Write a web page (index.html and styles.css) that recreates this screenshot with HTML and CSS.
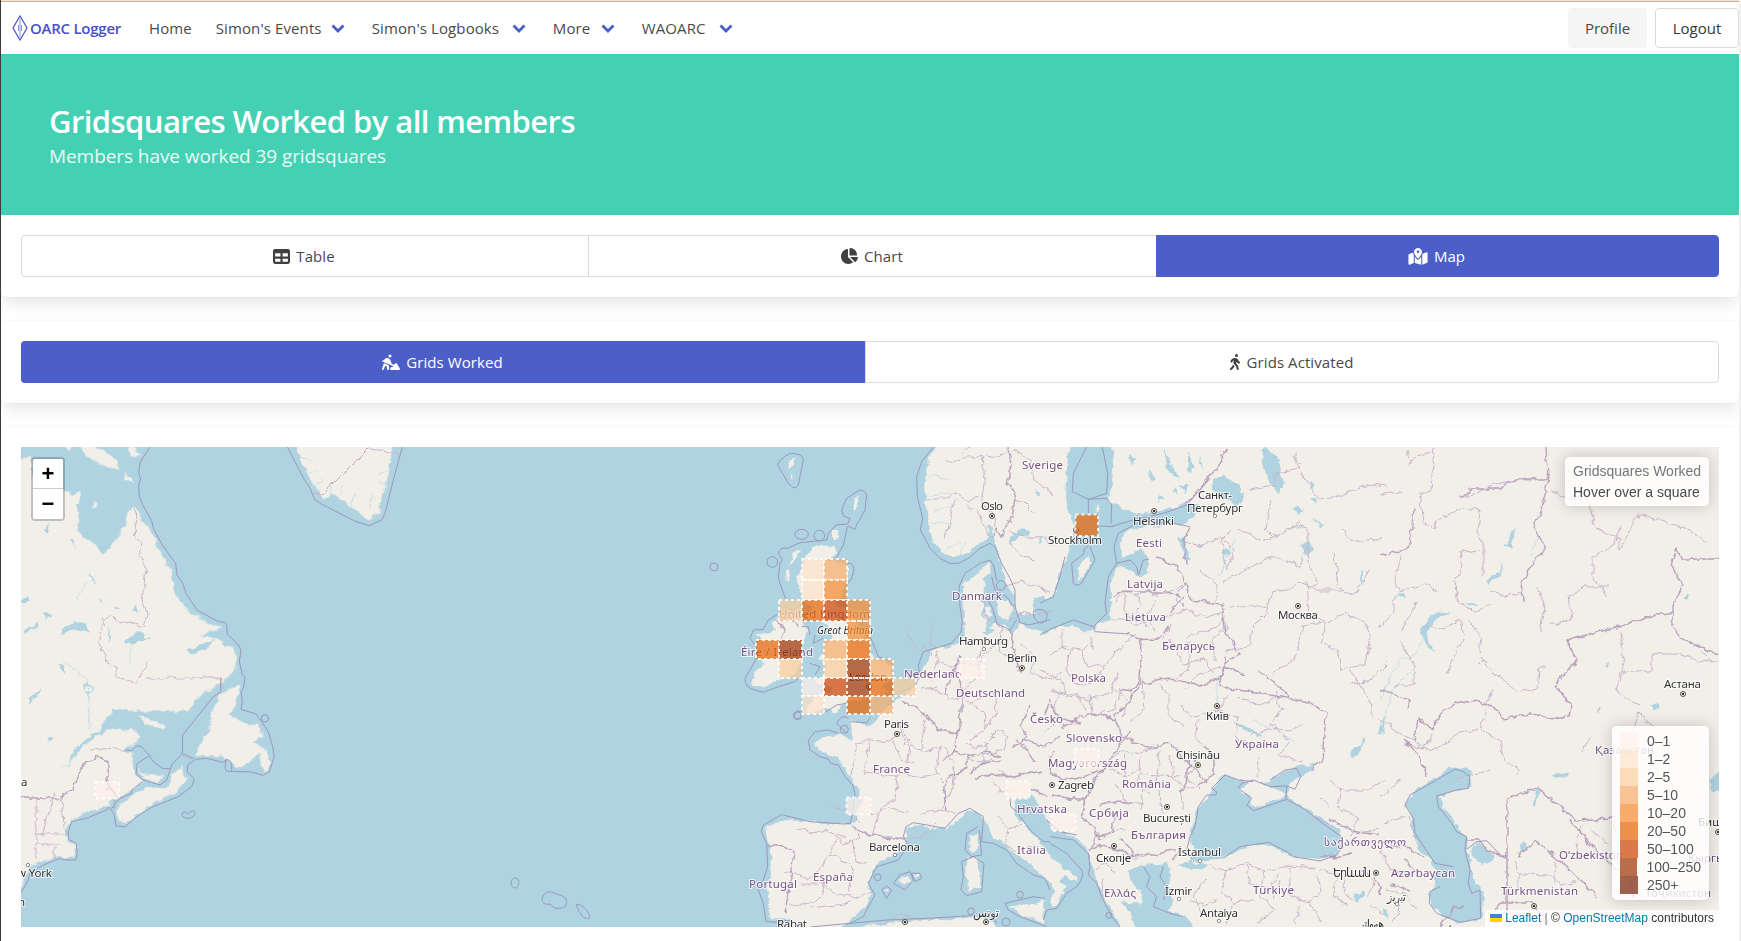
FILE: index.html
```html
<!DOCTYPE html>
<html lang="en">
<head>
<meta charset="utf-8">
<title>OARC Logger</title>
<link rel="stylesheet" href="styles.css">
</head>
<body>
<div class="page">
  <nav class="navbar">
    <a class="brand">
      <svg class="brand-mark" viewBox="0 0 16 26"><path d="M8 1 15 13 8 25 1 13Z" fill="none" stroke="#4a50c8" stroke-width="1.2"/><path d="M8 4v18M6.500 10v6M9.500 10v6" fill="none" stroke="#8d92df" stroke-width="1"/></svg>
      <span>OARC Logger</span>
    </a>
    <a class="nav-item">Home</a>
    <a class="nav-item has-menu" style="width:144px"><span>Simon's Events</span><svg class="chevron" viewBox="0 0 14 9"><path d="M1.500 1.500 7 7 12.500 1.500"/></svg></a>
    <a class="nav-item has-menu" style="width:169px"><span>Simon's Logbooks</span><svg class="chevron" viewBox="0 0 14 9"><path d="M1.500 1.500 7 7 12.500 1.500"/></svg></a>
    <a class="nav-item has-menu" style="width:77px"><span>More</span><svg class="chevron" viewBox="0 0 14 9"><path d="M1.500 1.500 7 7 12.500 1.500"/></svg></a>
    <a class="nav-item has-menu" style="width:106px"><span>WAOARC</span><svg class="chevron" viewBox="0 0 14 9"><path d="M1.500 1.500 7 7 12.500 1.500"/></svg></a>
    <div class="nav-buttons">
      <a class="button light">Profile</a>
      <a class="button outlined">Logout</a>
    </div>
  </nav>

  <header class="hero">
    <h1>Gridsquares Worked by all members</h1>
    <p>Members have worked 39 gridsquares</p>
  </header>

  <main>
    <section class="box">
      <div class="tabs views">
        <a class="tab"><svg viewBox="0 0 512 512" width="17" height="17"><path d="M64 256V160H224v96H64zm0 64H224v96H64V320zm224 96V320H448v96H288zM448 256H288V160H448v96zM64 32C28.700 32 0 60.700 0 96V416c0 35.300 28.700 64 64 64H448c35.300 0 64-28.700 64-64V96c0-35.300-28.700-64-64-64H64z"/></svg><span>Table</span></a>
        <a class="tab"><svg viewBox="0 0 576 512" width="18" height="16"><path d="M304 240V16.600c0-9 7-16.600 16-16.600C443.700 0 544 100.300 544 224c0 9-7.600 16-16.600 16H304zM32 272C32 150.700 122.100 50.300 239 34.300c9.200-1.300 17 6.100 17 15.400V288L412.500 444.500c6.700 6.700 6.200 17.700-1.500 23.100C371.800 495.600 323.800 512 272 512C139.500 512 32 404.600 32 272zm526.400 16c9.300 0 16.600 7.800 15.400 17c-7.700 55.900-34.600 105.600-73.900 142.300c-6 5.600-15.400 5.200-21.200-.7L320 288H558.400z"/></svg><span>Chart</span></a>
        <a class="tab active"><svg viewBox="0 0 576 512" width="20" height="17"><path d="M408 120c0 54.600-73.100 151.900-105.200 192c-7.700 9.600-22 9.600-29.600 0C241.100 271.900 168 174.600 168 120C168 53.700 221.700 0 288 0s120 53.700 120 120zm8 80.400c3.500-6.900 6.700-13.800 9.600-20.600c.5-1.200 1-2.500 1.500-3.700l116-46.400C558.900 123.400 576 135 576 152V422.800c0 9.800-6 18.600-15.100 22.300L416 503V200.400zM137.600 138.300c2.400 14.100 7.200 28.300 12.800 41.500c2.900 6.800 6.100 13.700 9.600 20.600V451.800L32.900 502.700C17.100 509 0 497.400 0 480.400V209.600c0-9.800 6-18.600 15.100-22.300l122.600-49zM327.800 332c13.900-17.400 35.700-45.700 56.200-77V504.300L192 449.400V255c20.500 31.300 42.300 59.600 56.200 77c20.500 25.600 59.100 25.600 79.600 0zM288 152a40 40 0 1 0 0-80 40 40 0 1 0 0 80z"/></svg><span>Map</span></a>
      </div>
    </section>

    <section class="box">
      <div class="tabs modes">
        <a class="tab active"><svg viewBox="0 0 576 512" width="18" height="16"><path d="M208 64a48 48 0 1 1 96 0 48 48 0 1 1-96 0zM9.800 214.800c5.100-12.200 19.100-18 31.400-12.900L60.700 210l22.900-38.100C99.900 144.600 129.300 128 161 128c51.400 0 97 32.900 113.300 81.700l34.600 103.700 79.300 33.100 34.200-45.600c6.400-8.500 16.600-13.300 27.200-12.800s20.300 6.400 25.800 15.500l96 160c5.900 9.900 6.100 22.200 .4 32.200s-16.300 16.200-27.800 16.200H288c-11.100 0-21.400-5.700-27.200-15.200s-6.400-21.200-1.400-31.100l16-32c5.400-10.800 16.500-17.700 28.600-17.700h32l22.500-30L22.800 246.200c-12.200-5.100-18-19.100-12.900-31.400zm82.800 91.800l112 48c11.800 5 19.400 16.600 19.400 29.400v96c0 17.700-14.300 32-32 32s-32-14.300-32-32V405.100l-60.600-26-37 111c-5.600 16.800-23.700 25.800-40.500 20.200S-3.900 486.600 1.600 469.900l48-144 11-33 32 13.700z"/></svg><span>Grids Worked</span></a>
        <a class="tab"><svg viewBox="0 0 320 512" width="12" height="16"><path d="M160 48a48 48 0 1 1 96 0 48 48 0 1 1-96 0zM126.500 199.300c-1 .4-1.900 .8-2.900 1.200l-8 3.500c-16.400 7.300-29 21.200-34.700 38.200l-2.600 7.800c-5.600 16.800-23.700 25.800-40.500 20.200s-25.800-23.700-20.200-40.500l2.600-7.800c11.400-34.100 36.600-61.900 69.400-76.500l8-3.500c20.800-9.200 43.300-14 66.100-14c44.600 0 84.800 26.800 101.900 67.900L281 232.700l21.400 10.700c15.800 7.900 22.200 27.100 14.300 42.900s-27.100 22.200-42.900 14.300L247 287.300c-10.300-5.200-18.400-13.800-22.800-24.500l-9.600-23-19.300 65.500 49.500 54c5.400 5.900 9.200 13 11.200 20.800l23 92.100c4.300 17.100-6.100 34.500-23.300 38.800s-34.500-6.100-38.800-23.300l-22-88.100-70.700-77.100c-14.800-16.100-20.300-38.600-14.700-59.700l16.900-63.500zM68.700 398l25-62.400c2.100 3 4.500 5.800 7 8.600l40.700 44.400-14.500 36.200c-2.400 6-6 11.500-10.600 16.100L54.600 502.600c-12.500 12.500-32.800 12.500-45.300 0s-12.500-32.800 0-45.300L68.700 398z"/></svg><span>Grids Activated</span></a>
      </div>
    </section>

    <section class="box">
      <div class="map">
        <svg class="tiles" viewBox="21 447 1698 480" width="1698" height="480">
          <defs>
            <filter id="rough" filterUnits="userSpaceOnUse" x="0" y="430" width="1741" height="511"><feTurbulence type="fractalNoise" baseFrequency=".11" numOctaves="3" seed="4"/><feDisplacementMap in="SourceGraphic" scale="7" xChannelSelector="R" yChannelSelector="G"/></filter>
            <radialGradient id="dot"><stop offset=".38" stop-color="#333"/><stop offset=".5" stop-color="#f4f0da"/></radialGradient>
          </defs>
          <rect class="sea" x="21" y="447" width="1698" height="480"/>
          <g filter="url(#rough)">
            <rect class="land" x="1045" y="435" width="700" height="505"/>
            <!-- eastern seas -->
            <g class="sea" transform="translate(1040 430) scale(.33333)">
              <path d="M90 40H215L220 110 215 170 205 215 240 230 280 250 330 248 400 235 440 215 480 225 470 245 450 270 430 285 400 280 340 290 300 290 250 310 240 350 245 385 300 360 325 380 322 430 300 445 275 425 240 405 215 440 210 500 212 575 170 580 160 605 130 605 100 585 50 590 0 620-60 590-130 600-130 560-75 550-22 548-20 505 0 512 45 490 60 430 85 370 95 320 110 290 90 260 75 200 80 120Z"/>
              <path d="M520 150 550 135 600 170 612 205 590 225 540 200 515 180ZM670 45 720 90 715 120 735 150 715 190 690 160 665 100ZM760 238l20-8 8 14-16 8ZM778 345l30-8 14 20-20 20ZM545 365l20-6 6 12-20 6ZM415 320l25 5-4 30 16 26-14 14-14-40ZM820 262l28 28-6 0-24-24ZM960 420l8 0 2 50-8-20ZM808 155l10 0-2 20-8-4ZM815 200l12 4 0 20-6-4Z"/>
              <path class="land" d="M110 410 150 375 155 400 130 440 112 452ZM160 232l12-4 8 8-12 8ZM240 325l25-8 8 12-20 10ZM240 355l30-10 20 8-10 14-34 8Z"/>
            </g>
            <g class="sea" transform="translate(1040 680) scale(.33333)">
              <path d="M-80 350-20 340 0 395 40 445 100 470 140 500 150 530 160 590 190 640 220 700 245 760H-80Z"/>
              <path d="M265 575 300 555 380 550 395 580 385 620 400 660 380 690 440 715 475 760H290L275 700 240 665 300 675 310 640 285 620Z"/>
              <path d="M450 490 455 440 475 380 500 360 520 320 550 285 600 300 640 315 690 305 700 290 770 260 830 250 790 290 750 310 740 345 755 360 800 385 860 425 900 450 910 500 890 530 800 540 730 520 690 495 640 495 590 515 550 535 500 540 440 545 470 520Z"/>
              <path d="M415 555 450 545 510 555 490 568 430 565ZM935 650l35-18 10 6-30 26ZM930 215l25-15 15-25 5 5-20 40-20 10ZM575 122l50 20 40 24-4 4-50-22ZM1015 160l14-40 10-18-16 60Z"/>
              <path class="land" d="M592 325 640 308 690 318 735 340 722 358 680 365 650 385 630 375 625 350Z"/>
            </g>
            <g class="sea" transform="translate(1380 690) scale(.33333)">
              <path d="M75 345 105 300 160 270 200 235 240 232 275 245 270 295 230 300 180 320 190 350 215 385 235 420 265 440 265 480 275 540 290 580 310 610 305 685 240 700 190 680 150 640 148 600 165 580 165 530 120 480 95 430 100 380ZM275 470 300 460 330 480 340 510 310 525 275 500ZM1025 235 990 275 995 310 1025 300ZM465 300l10-2-6 50-10 0ZM515 260l15-12 20 4 20-6-12 16-30 4ZM418 465l14-15 8 14-10 20-12-4ZM818 42l16-2 6 16-20 4ZM10 650l15 10-4 30-12-20Z"/>
            </g>
            <g class="sea" transform="translate(1380 430) scale(.33333)">
              <path d="M120 600l20-20 10-25 30-10 30 0-40 20-20 25-10 20 10 30 20 20-26-6ZM365 345l20-5 8-35 12-10-8 30 4 30-16 0ZM320 450l20-15 20-8 0-28 6 20-2 18-26 12-18 14ZM255 518l25-2 14 8-26 2ZM675 705l12-10-2 14-12 6ZM912 500l16-4-4 12-12 2ZM965 665l14 4-2 12ZM655 830l6 0-4 22-6 2ZM45 490l24 0 6 12-20-4Z"/>
            </g>
            <!-- Canada and Greenland -->
            <g class="land" transform="translate(0 430) scale(.33333)">
              <path d="M40 105 95 78 97 130 190 180 208 180 218 195 240 182 238 215 230 225 236 260 233 290 250 325 275 330 290 355 308 368 330 355 350 335 360 310 375 290 378 260 400 225 415 240 430 270 455 305 470 345 490 380 505 400 515 420 520 470 530 500 550 530 590 560 660 590 640 605 600 615 650 625 670 645 705 660 708 715 690 740 655 765 600 800 565 840 500 845 345 838 320 860 310 890 270 920 230 950 200 1000 180 1020 205 1000 240 958 300 910 345 895 400 897 418 925 400 945 365 955 395 965 395 1005 408 1040 430 1055 390 1085 330 1110 325 1130 280 1140 210 1170 195 1200 205 1235 230 1250 222 1280 185 1280 130 1290 90 1310 63 1370 40 1380Z"/>
              <path d="M420 1080 460 1073 510 1070 515 1035 545 1005 550 1030 565 1050 525 1090 470 1115 430 1140 375 1182 350 1160 355 1130ZM412 1010 430 1030 490 1035 470 1058 430 1045ZM410 857 450 865 500 890 495 898 440 885ZM235 45 275 90 340 118 360 118 350 90 310 60 280 40ZM190 45l20 25 5-20ZM380 50l20 32 18-5-20-30ZM375 125l25 20 0 14-24-12ZM278 215l14 0-2 16-12 6Z"/>
              <path d="M700 770 718 768 705 820 690 850 730 880 780 885 790 920 760 935 800 960 812 1000 800 1028 780 1010 785 970 730 1010 715 1015 690 990 640 975 585 978 600 940 625 900 635 850 660 795Z"/>
              <path d="M890 40 905 100 940 160 970 205 1000 190 1040 220 1070 245 1105 268 1140 250 1145 200 1165 140 1178 40Z"/>
            </g>
            <!-- north-west Europe -->
            <g class="land" transform="translate(700 430) scale(.33333)">
              <path d="M725 35 690 75 680 110 672 170 680 240 690 290 700 330 720 365 760 385 800 370 830 345 865 325 875 290 880 325 895 370 905 420 920 460 945 500 950 550 1000 555 1000 505 1060 490 1080 420 1105 370 1125 300 1105 240 1095 180 1100 35Z"/>
              <path d="M870 395 850 415 820 435 790 460 788 520 795 590 830 600 860 600 855 540 840 510 860 470 850 440 872 430ZM850 530l20 0 8 25-22 12-10-18ZM890 515l35-8 15 30-15 30-30-10ZM870 590l40-5 20 14-30 6Z"/>
              <path d="M1060 620 1000 600 960 585 940 610 900 600 860 610 830 590 790 585 795 620 780 640 720 655 690 665 680 700 660 740 645 770 620 790 590 810 560 830 540 850 520 885 495 890 455 870 460 920H1060Z"/>
              <path d="M340 350 400 345 410 370 385 395 430 400 445 420 440 450 420 500 400 520 430 530 445 545 480 590 505 640 520 690 550 690 580 710 565 750 545 775 575 785 540 800 500 805 460 810 430 820 400 850 380 835 340 845 310 855 340 810 360 795 390 790 400 770 370 765 345 755 370 730 375 700 350 690 380 670 375 640 395 620 385 590 360 570 330 575 320 560 340 530 310 520 300 480 290 450 310 400 325 370Z"/>
              <path d="M275 375 300 355 292 385 270 405ZM260 415l10 0-6 40-8-4ZM395 300l20 0-6 30-12 0ZM465 205l12-8-8 45-10-6ZM262 100l25-12 0 15-20 10ZM274 135l6 0 0 16-6-4Z"/>
              <path d="M235 560 275 545 305 575 325 600 310 640 305 690 290 730 240 750 185 775 155 765 160 730 190 700 180 680 165 655 185 630 170 610 225 600 215 575Z"/>
              <path class="sea" d="M865 285l8 0 4 40-8 0ZM935 320l20-20 20-5 15 10-10 14-24 4-16 20-10-6ZM1005 180l20 10-10 6ZM1010 340l10-26 6 0-6 26Z"/>
            </g>
            <!-- western Europe and Mediterranean -->
            <g class="land" transform="translate(700 690) scale(.33333)">
              <path d="M447 88 465 108 515 105 545 80 580 40H1070L1075 420 1020 360 1000 315 945 325 940 345 945 380 1000 430 1050 495 1095 540 1135 562 1130 575 1090 555 1080 570 1095 590 1080 625 1062 650 1050 635 1065 600 1045 575 1010 540 990 520 940 490 900 450 880 440 860 400 835 370 810 365 780 385 740 415 700 415 640 405 615 420 625 450 615 465 590 490 530 520 500 575 515 610 490 655 460 680 430 711 410 730H300L275 690 250 685 205 685 210 640 200 600 212 540 210 470 200 440 195 410 250 390 330 395 400 400 455 405 470 390 475 350 490 330 470 290 450 260 435 230 410 200 360 185 345 160 370 140 420 135 460 150Z"/>
              <path d="M925 650 1000 640 1035 632 1025 700 960 670ZM800 505 835 500 840 590 810 600 795 560ZM810 440 835 430 830 480 815 490ZM595 570l30-10 6 14-22 12ZM640 552l16 4-4 10ZM552 600l10-4 0 14ZM470 735 480 711 560 700 650 690 740 690 830 680 880 690 900 735Z"/>
            </g>
            <!-- lakes -->
            <g class="sea">
              <path d="M21 600l6-4 3 5-6 2ZM42 615l5-3 5 3-6 3ZM22 631l12-5 4-4 2 4-16 8ZM62 629l12-7 10 2 4 8-14-2-12 5ZM124 642l8-6 6-6 8 8 4 0-10 4-10 3ZM108 625l3 12-2 5ZM28 702l8-8 6-5-2 6-10 8ZM185 651l16-7 14-4-10 10-16 4ZM47 738l6 2-4 3ZM60 665l4 0 2 10-4-5ZM74 540l2 8-6-8ZM132 610l4-4 2 6ZM90 575l5 8-1 0-6-8ZM50 520l-6 12 3 0ZM100 598l3 2-3 2ZM116 606l3 3-4 0Z"/>
              <path d="M1150 470l6 8-4 4-4-8ZM1165 450l8 16 5 14-5-4-8-16ZM1188 452l4 8 0 14-4-4ZM1180 485l8 0-2 8ZM1130 455l6 4-4 8ZM1160 495l4 4-6 2ZM1172 492l5-4 0 7ZM1200 455l3 14-4-6Z"/>
            </g>
            <circle cx="88.500" cy="689" r="4.500" fill="none" stroke="#aad3df" stroke-width="1.300"/>
            <path class="river" d="M63 660l25 20 2 50M88 580l-12 22M130 640l0 24M150 510l12 10M155 530l14 8M160 550l14 4M165 565l12 4M175 590l12 4M185 600l16 6M190 612l18-4M300 458l12 3M305 475l12-5M312 488l10-8M328 498l6-12M338 503l4-16M350 510l5-18M370 510l2-16M390 470l-12 4M388 485l-10-3M930 475l20 4M928 495l22-2M935 510l20-5M932 525l20-3M946 550l14-8M960 556l6-14M990 540l0-14M1235 540l-16 35M1380 700l20-40 16-6 18-34M1382 735l10-45 26-26M1217 680l0 30M1254 720l40 20M1540 535l-10 20"/>
          </g>

          <!-- regional boundaries -->
          <g class="region" filter="url(#rough)">
            <path d="M133 505l4 12-3 18 8 8-2 14 6 12-4 30 5 14-3 14M110 614l10 10 12-2 10 5M110 614l-7 10-4 20 8 10-2 8 10 4 2 10 20 8 5-12 8-12M102 618l4 8M146 678h75v12M182 754l12 6M90 750l25-2 18 4M55 792l-10 30-2 14M62 795l2 32M36 799v60M36 834l27 0 6-4M35 844h26M54 846v14"/>
            <path d="M313 494l12-2 43-43 22 2 10 2"/>
            <path d="M946 462l28-5 25-1 9-3M960 455l10-8M982 457l3 22-4 22 12 15 2 12M926 500l20-2 10-4 12 7 10-4M955 500l-5 18-6 20M968 505l12 10 10 22M1014 450l16 10 4 20 12 8 6 10M1010 530l16 8 18-2 8 10M1013 500l10 2 10 10M1003 585l20-3 26 10M1008 540l12 14 14 6"/>
            <path d="M905 630l12 20 8-4 6 10M934 622l-4 16 8 20-8 22M936 660l16 8 12-6 14 4 4-20M982 600l6 20 14 8-4 22 16 8M1010 620l14-8 12 4 16-6M935 690l16 10 12-4 24 20-2 18M920 690l16-2M1000 640l-18 16-4 20-16 14M1020 645l14 12-4 16 22 6 10-8"/>
            <path d="M855 745l14-6 20 2 12-8 10 10-4 20M870 740l-6 32M893 740l8 20 14 4M902 725l6 20 14 6 22-4 10 16M857 745l-6 30M864 772l34 4 8-3 14 4 18-3M898 776l-3 22-14 10-10 28M880 835l22 4 20-2 14-12M872 815l16-8 20 6M905 745l-6-22M940 745l-4 28 8 10M920 815l20-5 14 4M926 720l-6 30M955 766l-2 22-12 20M830 805l20 6 12 12"/>
            <path d="M795 829l18 4 12-3 20 8M835 835l8 10 10-4 8-8M785 870l22 10M807 880l10-8 12-18 12 4 12 12-4 22M790 905l24-2 8-8 4-20M852 898l20-6M829 854l4-10 14-8M852 840l4 20 10 4M800 884l20 0M820 880l16 14 16 2M811 908l40-5"/>
            <path d="M968 705l14-10 12-4 2 20-10 18-16 12M988 740l10-10 10 6-4 14-22 6M965 742l10 6 14-6M968 758l12 4 14-4M985 740v20M1000 770l10 6 16-4M990 782l12 10 12-2M998 815l10 14 14-4M1008 830l-4 14 12 8M1015 826l10-10M1020 850l14-5"/>
            <path d="M1062 630l0 18 20 2 10-10M1050 655l18-10M1082 650l6 18 18-4 18-20 12-10M1070 650l-4 20 12 16 16-4 10-16M1090 636l2 14M1040 670l20 8 8 18 22 4 22-8 6-20M1060 690l-6 22M1090 695l2 20M1115 690l12 10-4 18M1115 600l10-8 14 4 8-6 12 6M1140 595l-2 18 8 14M1125 595l0 20 14 6M1155 600l-8 18 8 14M1110 620l14 0 14 6 18-8M1165 595l18-10-8 15 8 8"/>
            <path d="M1160 620l26-12 20 10 16-6 6 16-14 10 0 22M1170 640l14 24 20-4 10 14M1225 610l-8 18-30 8M1190 640l-2 30-22 12M1172 625l-10 14M1185 690l14-16 22-6M1228 605l40 2M1226 570l-4-30 8-10M1240 530l20 10 18-4 22-14M1222 582l40-20 12-6 26 10 8-20M1200 570l16 14 0 18M1183 540l20 6 18-10 14 14-10 20M1272 500l-6 28 10 10M1292 525l16 4 0 32 10 22-10 6M1272 592l14-2 12-8 18 8 26 0M1272 592l-6 22-16 16 0 16-24 6M1307 582l2 30 16 10-4 22M1324 625l22-12 22 12 2 20-6 20-22 4-4-18-14-8M1300 640l-6 20-22 14M1300 640l2-14 20-4"/>
            <path d="M1250 490l24-4 0-12 26-5M1296 450l0 14 12 20 12 14 20-2 30-12 18 2M1300 465l-8-10M1407 450l3 14 6-8 16-4M1434 448l-3 42-12 6M1380 495l24-4M1420 492l4 30 10 8 4-10 22-10M1459 498l14-4 24-10 18-4 20 0M1462 508l18 2-2 22 5 12 0 34M1480 550l-18 2-2 20-6 10 4 20 18 10 14-8M1490 592l18 4 14-2M1400 590l-6-10 8-24M1398 592l26-8 14 8M1340 530l16 12 26-4M1370 570l-12 22-12 2-8-10-4-30M1394 595l0 16-16 18M1418 602l-18 30M1465 620l14 12 2 30 18 14 18 16 20-4 2-20 8 0M1537 588l8 20-4 24M1420 626l24 4 14-10 8 14-20 40M1550 490l20 10 16-4 10 32 22 10 2 12 10-20 8-16 40 12 30 16M1607 596l-14-20 0-20 20-10 8-20M1620 630l4 42 28-2 0-16 30 0 16 8 20-2M1548 625l24-6-4-22 16-10 24 0M1622 672l-6 18 22 16M1378 718l30 20 16 10 8-14M1400 640l14 26 0 20-20 0M1390 660l-20 20-18 4M1350 670l20 30 2 20"/>
            <path d="M1050 690l28 6 8 14M1057 720l-10 12M1122 690l-8 20-20 6M1160 684l8 12 0 20 16 10M1142 680l2 30-16 12M1180 705l10 12 28-6 10-16M1217 710l22 8-4 18 18 14M1198 720l-4 14 14 16M1237 697l24 8 14-8M1274 690l8 20-12 14 18 14M1250 735l18-6 22 2 14-8M1290 740l-12 16 24 6M1260 758l-4 20"/>
            <path d="M1110 758l14-8 16 4 18-10M1112 770l16 6 12-8M1124 750l2 26M1140 755l-2 30 12 8M1160 750l-4 32M1140 775l40 2M1170 755l4 24 18 10M1117 784l10 20 16 0M1143 790l-4 20M1160 790l2 24M1180 790l4 20M1200 765l-16 12 16 12"/>
            <path d="M1090 790l-6 16M1100 840l10-8 14-2M1094 870l12-6 10 10M1104 878l-4 24M1130 860l18-4M1330 780l12 10-4 16 20 12-8 18M1340 790l26 0 20-10M1320 798l10 8M1310 815l22 10M1332 822l28 10 20-4"/>
            <path d="M1210 865l16 6 20-8 18 8 28-6 24 2M1205 880l-12 16 10 20M1226 870l-6 22 14 10-8 22M1246 865l4 20 20 4 8-16M1264 870l-4 24 14 16-18 14M1292 865l-4 30 20 8 14-12-6-18M1300 905l-6 20M1234 902l20-2M1320 870l18 4-6 22 18 10M1308 900l12 20M1280 880l-6 20M1216 900l-14 6M1350 865l-8 22 10 14M1190 900l14 4"/>
            <path d="M1518 775l0-5-14-10-4-20-20-10M1405 745l34 4 16-14 22-6M1490 770l-18 5-18 4M1380 798l20-18M1385 823l24-8 4 18 10 14M1580 860l-4-20 6-16M1515 860l3 14 0 16M1518 874l34 1 8 10 16-4M1555 862l0 20M1582 752l8-15M1480 730l12-40M1610 760l20-18 8-30 16 15M1590 830l20 14"/>
            <path d="M880 925l20-10 20 4M1380 850l10 20 16 4M1360 870l14 10-6 18M1385 890l20 4 12 16M1400 905l-8 20M1370 905l16 12"/>
          </g>

          <!-- national boundaries -->
          <g class="nation" filter="url(#rough)">
            <path d="M21 798h37l14-8 12-28 14-5 10 5v26l8 8-2 14M1009 447l2 20-4 16 8 8-4 26-10 20-4-8-4 10M1228 447l-10 20-26 30-6 7M1190 525l-6 16 2 24M1113 597l10-6 18 1 20 0 10 2 10 2M1157 557l20 10 8 14 6 20M1170 612l14-16M1190 600l32 4 4 30 14 20-16 10M1139 640l20-2 10-12M1127 633l14 8-2 40-8 10-12-2M1140 684l30-6 30 8 20-8 4-12 20 8M1226 656l-6 30 30 6 60 10 16 12-4 44-12 12M1258 672l20 12 12 14M1140 682l-10 20-16 14 8 20 26 12 22-6M1130 732l-12 16-14 20M1170 744l12 14 14 12 10 12M1190 758l-4 26-6 8M1206 745l8 16 0 14-16 10M1115 720l-18-6-16 2-20 12M1050 705l12 14 20 4M1105 768l-20 8-22 4-14-10 4-20M1104 768l-10 12-8 20M1086 798l-4 20 12 8 6 14M1052 795l20 4 14 0M1100 805l20-4 12 2M1098 845l34 10 24 0 18-6M1090 850l8-14 14-4 2-14M1120 838l14 14-6 6M1180 848l-6 12"/>
            <path d="M902 700l18 10 20 20 18 4 4-24 0-20-8-20M958 730l-4 22 14 4 0 12-20 10M948 778l-4 14 2 20M968 756l18-4 14 4M942 760l12-8M975 780l14-6 22 2 14-4M1000 760l-16 2-14 12M1015 740l12 8 8 14M1031 706l-10 20 6 12-14 10M1022 740l22 6 16-10M1028 790l10 0 8 6M1050 700l-6 16M1022 775l20-4M852 826l14 8 24 4 18 4M768 846h12l14 6-2 16-2 20-6 26M781 640l4-10-8-10 14-2 8 8M1010 630l10 44M960 655l-16 40M1100 845l-10 4"/>
            <path d="M1546 447l2 30-4 24-10 26 12 22-14 14-10 20 2 18M1547 479l-32 0-16 10-28 0-10 10M1380 555l20-4 10-6 4-36M1719 559h-38l-4-10-6 16 12 20-10 20 0 20 6 14 18 6 22 10M1675 613l-28 4-24 8-58 16 12 18-10 12-12 14 8 10 8 12-2 10-20 2-10-6-16 2-20 4-6-10-18-8-12 2-10-2-18 14-6 14-14-10-6 22M1507 915V798l30-10 40 32 36-2 2 14M1570 820l20 24 20 20 20 14 4 20M1380 690l30 10-2 8M1404 740l14 14 8 22M1507 856l-14-2-14-14-12 0M1518 855l16-14 20 14 24 22 20 20M1404 860l14 10M1380 842l30 6 14 10M1330 820l20 10 30 4M1320 855l18 2 14-4M1375 876l6 20M1390 885l20 6M1490 917l10-14 30 0 20 20M1440 927l14-20 10 0"/>
          </g>

          <!-- territorial waters -->
          <g class="marine">
            <g transform="translate(0 430) scale(.33333)">
              <path d="M450 51 420 97 416 130 422 147 416 165 418 200 428 225 455 272 460 295 487 345 527 400 531 435 547 457 558 490 592 541 655 575 675 577 680 585 682 612 715 645 723 660 718 695 727 733 735 742 730 775 723 785 727 815 723 838 768 852 785 875 805 905 818 950 823 980 808 1025 790 1036 755 1026 697 1024Q675 1028 675 1010L678 990Q690 985 695 1005V1024M678 990 668 997 620 985 587 988 563 1005 562 1025 583 1048 575 1070 535 1100 455 1132 415 1157 375 1190 348 1188 342 1150 325 1130 320 1140 295 1150 265 1163 215 1175 205 1205 206 1228 228 1240 232 1265 228 1290 200 1290 178 1286 130 1305 90 1330 85 1350 63 1388M662 745V785L640 800 548 915 547 970 583 987M547 970 515 1005 512 1016 487 1015 460 995 447 975 425 950 410 948 395 962 375 960M447 978 412 1000 408 1030 425 1048 480 1065 500 1050 512 1016M335 1135 360 1105 395 1090 395 1080 430 1053M862 51 912 147 930 175 945 210 960 220 1068 275 1108 287 1145 270 1155 250 1180 150 1207 51"/>
              <circle cx="795" cy="865" r="11"/><path d="M566 1150q14-14 18-4t-12 18q-22 4-25-8t12-10q3 8 7 4"/>
            </g>
            <g transform="translate(700 430) scale(.33333)">
              <path d="M700 51 665 95 650 140 652 200 668 265 661 300 675 325 690 355 720 385 750 400 775 400 805 385 840 355 870 340 885 350 905 400 930 445 945 480 945 530 960 578 985 585 1050 570M890 450 880 405 870 390 840 400 795 430 777 470 780 530 787 575 783 605 755 640 670 665 655 705 660 740 640 770 580 795M860 500 880 540 890 580 930 600 950 570M875 440 885 480 920 500 940 530M408 385 430 345 440 300 445 288 465 298 470 285 495 240 500 195Q490 175 475 182L440 205 425 240 430 258 450 265 443 282 408 285 385 310 380 330 300 338 262 355Q240 350 235 370L247 390 240 400 235 445 247 480 258 510M440 400Q460 395 462 420L455 445 440 465M511 620 535 680 562 690 580 705M305 590 325 590 330 615M345 615 340 640 370 625M330 700 360 710 345 735M300 545 258 550 230 555 205 570 190 598 160 600 150 625 170 650 167 690 147 725 135 745Q135 775 165 780L190 787 235 770 285 755 305 735M305 865Q280 875 283 855L292 843 305 845M370 850 410 825 440 820M270 70Q235 90 233 105L265 160Q285 185 295 165L310 90Q310 70 270 70"/>
              <circle cx="42" cy="411" r="12"/><circle cx="217" cy="396" r="16"/><ellipse cx="305" cy="313" rx="20" ry="15"/><circle cx="358" cy="317" r="16"/><circle cx="903" cy="466" r="14"/>
            </g>
            <g transform="translate(1040 430) scale(.33333)">
              <path d="M140 51 100 130 97 185 145 208 200 190 203 130 187 51M145 208V250M145 208 200 205 215 225 213 280M173 288 220 290M213 290 280 270 370 250 440 225 510 145M450 290 400 280 300 275 235 310 222 350 230 400 205 440 195 520 200 550 160 590 100 570 30 598 0 615M230 400 270 390 290 410 295 435 310 390 325 388M145 348Q128 355 132 370L95 400 100 460Q120 475 130 450L165 390 150 350M160 590 165 605 265 612M75 380 60 440 40 500 0 520M-20 545Q0 530 20 548 25 570 5 580-20 575-20 545"/>
            </g>
            <g transform="translate(700 690) scale(.33333)">
              <path d="M445 85Q425 70 410 100L440 130M450 95 500 98 512 82M415 130 385 120 345 125 325 150 330 180 360 200 385 207 392 220 415 225 435 260 458 285 465 310 460 350 452 400 430 402 330 395 245 374 190 405 184 425 200 460 203 530 190 570 175 600 190 640 198 695 230 697 270 690 290 700M440 705 490 680 500 660 525 615 505 580 530 530 595 510 625 465 610 440 618 410 640 398 680 405 735 415 775 370 810 355 850 380 845 455 880 460 920 480 950 520 1000 555 1035 565 1050 600M835 410 800 430 795 480 815 500 845 495 838 420M820 500 785 515 790 560 783 600 800 617 845 605 852 520ZM930 320 932 350 950 365 990 420 1030 455 1050 455M1035 625 1000 620 915 640 925 660 960 680 1040 710M330 711 450 700 560 690 680 685 800 678 870 665 890 700M580 580 600 555 630 545 640 570 615 600ZM635 550 660 550 665 565 645 575ZM545 600 560 588 575 600 560 625Z"/>
              <circle cx="292" cy="76" r="11"/><circle cx="433" cy="118" r="12"/><circle cx="533" cy="562" r="10"/><circle cx="813" cy="664" r="10"/><circle cx="960" cy="614" r="10"/><circle cx="918" cy="696" r="12"/>
            </g>
            <g transform="translate(1040 680) scale(.33333)">
              <path d="M30 470 100 480 145 520 150 560 145 585 170 610 185 650 205 690 215 710 240 741M30 490 80 520 125 570Q135 590 110 620L80 640 50 685 20 690 10 720M20 420 60 455 110 465M310 560 330 590 320 620 350 650 340 680 390 700 430 710M370 560 360 590 380 620 370 660M550 535 600 500 685 487 740 515 760 530 840 543 890 525 908 500 905 470 855 435 790 385 740 358 690 375 640 392 620 375 635 355 595 325 605 310 640 300 690 320 740 318 765 328 782 290 770 265 735 270 690 300M640 305 595 300 555 285 515 325Q535 335 528 345L500 345 475 380 465 440 450 470 440 510 455 535M740 318 738 358"/>
              <circle cx="207" cy="706" r="9"/>
            </g>
            <g transform="translate(1380 690) scale(.33333)">
              <path d="M75 345 90 315 170 270 225 237 250 245 270 260 265 295 230 300 170 318 175 350 215 400 230 425 260 440 255 480 270 540 265 580 275 610 300 600 302 685 240 697 170 670 148 640 150 605 180 590M220 530 165 520 105 430 100 385 75 345M260 478 290 455 320 452 345 478 365 498 382 498"/>
            </g>
            <ellipse cx="515" cy="883" rx="4" ry="5"/><path d="M542 898q4-10 14-4 14 2 10 12-10 6-16-2-8 2-8-6ZM576 904q12 2 14 14-8 4-14-14"/>
          </g>

          <!-- country labels -->
          <g class="country">
            <text x="1022" y="469" textLength="41">Sverige</text><text x="952" y="600" textLength="50">Danmark</text><text x="779" y="618" textLength="91">United Kingdom</text><text x="741" y="656" textLength="72">Éire / Ireland</text><text x="904" y="677.500" textLength="58">Nederland</text><text x="956" y="697" textLength="69">Deutschland</text><text x="1030" y="723" textLength="33">Česko</text><text x="1136" y="547" textLength="26">Eesti</text><text x="1127" y="588" textLength="36">Latvija</text><text x="1125" y="621" textLength="41">Lietuva</text><text x="1162" y="650" textLength="53">Беларусь</text><text x="1071" y="681.500" textLength="35">Polska</text><text x="1066" y="742" textLength="56">Slovensko</text><text x="1048" y="767" textLength="79">Magyarország</text><text x="1122" y="788" textLength="49">România</text><text x="1235" y="748" textLength="44">Україна</text><text x="1089" y="817" textLength="40">Србија</text><text x="1131" y="839" textLength="55">България</text><text x="1017" y="812.500" textLength="50">Hrvatska</text><text x="1017" y="854" textLength="29">Italia</text><text x="873" y="773" textLength="37">France</text><text x="813" y="881" textLength="40">España</text><text x="749" y="888" textLength="48">Portugal</text><text x="1104" y="897" textLength="32">Ελλάς</text><text x="1253" y="894" textLength="41">Türkiye</text><text x="1324" y="846" textLength="82">საქართველო</text><text x="1391" y="877" textLength="64">Azərbaycan</text><text x="1501" y="895" textLength="77">Türkmenistan</text><text x="1559" y="859" textLength="64">O‘zbekiston</text><text x="1595" y="754" textLength="59">Қазақстан</text><text x="1688" y="862">Кыргызстан</text><text x="1645" y="897" textLength="66">Тоҷикистон</text>
          </g>
          <g class="city">
            <text x="981" y="510" textLength="22">Oslo</text><text x="1048" y="544" textLength="54">Stockholm</text><text x="1133" y="524.500" textLength="41">Helsinki</text><text x="1198" y="499" textLength="34">Санкт-</text><text x="1187" y="512" textLength="56">Петербург</text><text x="959" y="645" textLength="49">Hamburg</text><text x="1007" y="662" textLength="30">Berlin</text><text x="1278" y="619" textLength="40">Москва</text><text x="1206" y="720" textLength="23">Київ</text><text x="1176" y="759" textLength="44">Chișinău</text><text x="1058" y="789" textLength="36">Zagreb</text><text x="1143" y="822" textLength="48">București</text><text x="1096" y="862" textLength="35">Скопје</text><text x="1178" y="856" textLength="43">İstanbul</text><text x="1165" y="895" textLength="27">İzmir</text><text x="1200" y="917" textLength="38">Antalya</text><text x="849" y="681" textLength="38">London</text><text x="884" y="728" textLength="25">Paris</text><text x="869" y="851" textLength="51">Barcelona</text><text x="777" y="928" textLength="30">Rabat</text><text x="973" y="917" textLength="26">تونس</text><text x="1333" y="877" textLength="38">Երևան</text><text x="1387" y="901" textLength="19">تبریز</text><text x="1359" y="928" textLength="25">هەولێر</text><text x="1440" y="934">تهران</text><text x="1664" y="688" textLength="37">Астана</text><text x="1698" y="826">Бишкек</text><text x="21" y="786">a</text><text x="17" y="877" textLength="35">w York</text><text x="18" y="906">n</text>
            <text class="island" x="817" y="634" textLength="56">Great Britain</text>
          </g>
          <g class="capital">
            <circle cx="992" cy="516" r="2.500"/><circle cx="1076" cy="530" r="2.500"/><circle cx="1154" cy="511" r="2.500"/><circle cx="1022" cy="668" r="2.500"/><circle cx="1298" cy="606" r="2.500"/><circle cx="1217" cy="706" r="2.500"/><circle cx="1198" cy="765" r="2.500"/><circle cx="1052" cy="785" r="2.500"/><circle cx="1167" cy="807" r="2.500"/><circle cx="1114" cy="846" r="2.500"/><circle cx="869" cy="687" r="2.500"/><circle cx="897" cy="734" r="2.500"/><circle cx="905" cy="922" r="2.500"/><circle cx="986" cy="922" r="2.500"/><circle cx="1376" cy="873" r="2.500"/><circle cx="1683" cy="694" r="2.500"/><circle cx="1534" cy="906" r="2.500"/><circle cx="1718" cy="832" r="2.500"/>
          </g>
          <g class="town">
            <circle cx="984" cy="649" r="1.700"/><circle cx="1215" cy="516" r="1.700"/><circle cx="895" cy="855" r="1.700"/><circle cx="1200" cy="861" r="1.700"/><circle cx="1179" cy="899" r="1.700"/><circle cx="1219" cy="921" r="1.700"/><circle cx="1397" cy="904" r="1.700"/><circle cx="28" cy="865" r="1.700"/>
          </g>

          <!-- worked gridsquares -->
          <g class="grid">
            <path class="g0" d="M802 678h22v18h-22zM960 659h24v19h-24zM846.500 797.500h24v17h-24zM1006.500 781.500h23v17h-23zM1074.500 749h24v17.500h-24zM1051.500 814.500h24v16.500h-24zM95.500 782h23.500v16.500H95.500z"/>
            <path class="g1" d="M802 559h22v21h-22zM802 580h22v20h-22zM802 696h22v18h-22z"/>
            <path class="g2" d="M779 600h23v21h-23zM779 659h23v19h-23zM824 659h23v19h-23zM893 678h23v18h-23z"/>
            <path class="g3" d="M824 559h23v21h-23zM824 640h23v19h-23zM870 659h23v19h-23zM870 696h23v18h-23z"/>
            <path class="g4" d="M824 580h23v20h-23zM847 600h23v21h-23zM847 621h23v19h-23z"/>
            <path class="g5" d="M802 600h22v21h-22zM756 640h23v19h-23zM847 640h23v19h-23zM870 678h23v18h-23zM847 696h23v18h-23zM1075.500 514.500h22.500v21.500h-22.500z"/>
            <path class="g6" d="M824 600h23v21h-23zM824 678h23v18h-23z"/>
            <path class="g7" d="M779 640h23v19h-23zM847 659h23v19h-23zM847 678h23v18h-23z"/>
          </g>
        </svg>

        <div class="zoom"><a>+</a><a>−</a></div>
        <div class="info panel"><h4>Gridsquares Worked</h4><span>Hover over a square</span></div>
        <div class="legend panel">
          <div><i class="k0"></i>0–1</div><div><i class="k1"></i>1–2</div><div><i class="k2"></i>2–5</div><div><i class="k3"></i>5–10</div><div><i class="k4"></i>10–20</div><div><i class="k5"></i>20–50</div><div><i class="k6"></i>50–100</div><div><i class="k7"></i>100–250</div><div><i class="k8"></i>250+</div>
        </div>
        <div class="attribution"><svg viewBox="0 0 12 8" width="12" height="8"><path fill="#4c7be1" d="M0 0h12v4H0z"/><path fill="#ffd500" d="M0 4h12v4H0z"/></svg> <a>Leaflet</a> <span class="bar">|</span> © <a>OpenStreetMap</a> contributors</div>
      </div>
    </section>
  </main>
</div>
</body>
</html>
```
FILE: styles.css
```css
* { box-sizing: border-box; }
html { overflow: hidden; }
body {
  margin: 0;
  height: 941px;
  overflow: hidden;
  background: #f0f0f0;
  color: #4a4a4a;
  font: 16px/24px "Open Sans", "Noto Sans", sans-serif;
}
.page {
  height: 941px;
  margin-right: 2px;
  overflow: hidden;
  border-left: 1px solid #3c3a3c;
  background: #fff;
}
.page::before {
  content: "";
  display: block;
  height: 1px;
  background: #fbe2cc;
  border-bottom: 1px solid #c9b2a2;
}

/* navigation */
.navbar { display: flex; align-items: center; height: 52px; background: #fff; }
.brand {
  display: flex;
  align-items: center;
  width: 136px;
  padding-left: 11px;
  color: #4a50c8;
  font-size: 15px;
  font-weight: 600;
  letter-spacing: -.25px;
  white-space: nowrap;
}
.brand-mark { width: 16px; height: 26px; margin-right: 2px; }
.nav-item {
  display: flex;
  align-items: center;
  padding: 0 12px;
  font-size: 15px;
  letter-spacing: .1px;
  white-space: nowrap;
}
.has-menu { justify-content: space-between; box-sizing: content-box; padding-right: 0; }
.chevron { width: 14px; height: 9px; margin-right: 15px; flex: none; }
.chevron path { fill: none; stroke: #485fc7; stroke-width: 2.8; }
.nav-buttons { display: flex; gap: 8px; margin-left: auto; }
.button {
  height: 40px;
  border: 1px solid transparent;
  border-radius: 4px;
  font-size: 15px;
  line-height: 38px;
  text-align: center;
}
.light { width: 79px; background: #f5f5f5; }
.outlined { width: 84px; border-color: #dbdbdb; color: #363636; }

/* hero */
.hero { height: 161px; padding: 48px 48px 0; background: #44d1b3; color: #fff; }
.hero h1 { margin: 0; font-size: 31px; font-weight: 600; line-height: 38px; letter-spacing: -.57px; }
.hero p { margin: 2px 0 0; color: #eafaf6; font-size: 19px; line-height: 28px; letter-spacing: -.07px; }

/* cards */
.box {
  margin-bottom: 24px;
  padding: 20px;
  border-radius: 6px;
  background: #fff;
  box-shadow: 0 8px 16px -2px rgba(10,10,10,.1), 0 0 0 1px rgba(10,10,10,.02);
}
.tabs { display: grid; height: 42px; }
.views { grid-template-columns: 567px 568px 563px; }
.modes { grid-template-columns: 844px 854px; }
.tab {
  display: flex;
  align-items: center;
  justify-content: center;
  gap: 6px;
  padding-right: 2px;
  border: 1px solid #dbdbdb;
  border-right-width: 0;
  font-size: 15px;
  letter-spacing: .08px;
}
.tab svg { fill: #404040; }
.tab:first-child { border-radius: 4px 0 0 4px; }
.tab:last-child { border-radius: 0 4px 4px 0; border-right-width: 1px; }
.tab.active { border-color: #4c5fc9; background: #4c5fc9; color: #fff; }
.tab.active svg { fill: #fff; }

/* map */
.map { position: relative; height: 480px; overflow: hidden; font: 14px/18px "Liberation Sans", Arial, sans-serif; }
.tiles { display: block; }
.sea { fill: #afd3e1; }
.land { fill: #f2efe9; }
.river { fill: none; stroke: #b9d9e3; stroke-width: .7; }
.region { fill: none; stroke: #c8b5cc; stroke-width: 1; }
.nation { fill: none; stroke: #b9a1bd; stroke-width: 1.4; }
.marine { fill: none; stroke: #9b95b8; stroke-width: .9; stroke-linejoin: round; }
.marine g { stroke-width: 2.9; }
.country, .city {
  font: 11.5px "Noto Sans", "DejaVu Sans", sans-serif;
  paint-order: stroke;
  stroke: rgba(255,255,255,.75);
  stroke-width: 2px;
}
.country { fill: #745080; }
.city { fill: #303030; }
.island { font-size: 10px; font-style: italic; }
.capital circle { fill: url(#dot); stroke: #444; stroke-width: .9; }
.town circle { fill: #fff; stroke: #777; stroke-width: .8; }
.grid path { fill-opacity: .7; stroke: #fff; stroke-width: 2; stroke-opacity: .85; stroke-dasharray: 3; }
.g0 { fill: #fff1ea; }
.g1 { fill: #fce2c9; }
.g2 { fill: #f9cd9b; }
.g3 { fill: #f6ac68; }
.g4 { fill: #f48a2d; }
.g5 { fill: #e66301; }
.g6 { fill: #cd4100; }
.g7 { fill: #9b3000; }

.zoom {
  position: absolute;
  top: 10px;
  left: 10px;
  width: 34px;
  border: 2px solid rgba(0,0,0,.2);
  border-radius: 4px;
  background-clip: padding-box;
}
.zoom a {
  display: block;
  height: 30px;
  border-radius: 0 0 2px 2px;
  background: #fff;
  color: #000;
  font: bold 22px/30px "Liberation Sans", sans-serif;
  text-align: center;
}
.zoom a:first-child { border-bottom: 1px solid #ccc; border-radius: 2px 2px 0 0; }
.panel {
  position: absolute;
  border-radius: 5px;
  background: rgba(255,255,255,.8);
  box-shadow: 0 0 15px rgba(0,0,0,.2);
}
.info { top: 10px; right: 10px; width: 144px; height: 49px; padding: 5px 8px; color: #4a4a4a; white-space: nowrap; }
.info h4 { margin: 0 0 3px; color: #777; font-size: 14px; font-weight: 400; line-height: 18px; }
.legend { right: 10px; bottom: 27px; width: 97px; height: 174px; padding: 6px 8px; color: #555; }
.legend div { display: flex; height: 18px; white-space: nowrap; }
.legend i { width: 18px; height: 18px; margin-right: 9px; opacity: .7; }
.k0 { background: #fff1ea; }
.k1 { background: #fce2c9; }
.k2 { background: #f9cd9b; }
.k3 { background: #f6ac68; }
.k4 { background: #f48a2d; }
.k5 { background: #e66301; }
.k6 { background: #cd4100; }
.k7 { background: #9b3000; }
.k8 { background: #762000; }
.attribution {
  position: absolute;
  right: 0;
  bottom: 0;
  height: 17px;
  padding: 0 5px;
  background: rgba(255,255,255,.8);
  color: #333;
  font-size: 12px;
  line-height: 17px;
  white-space: nowrap;
}
.attribution a { color: #0078a8; }
.bar { color: #777; }
```
